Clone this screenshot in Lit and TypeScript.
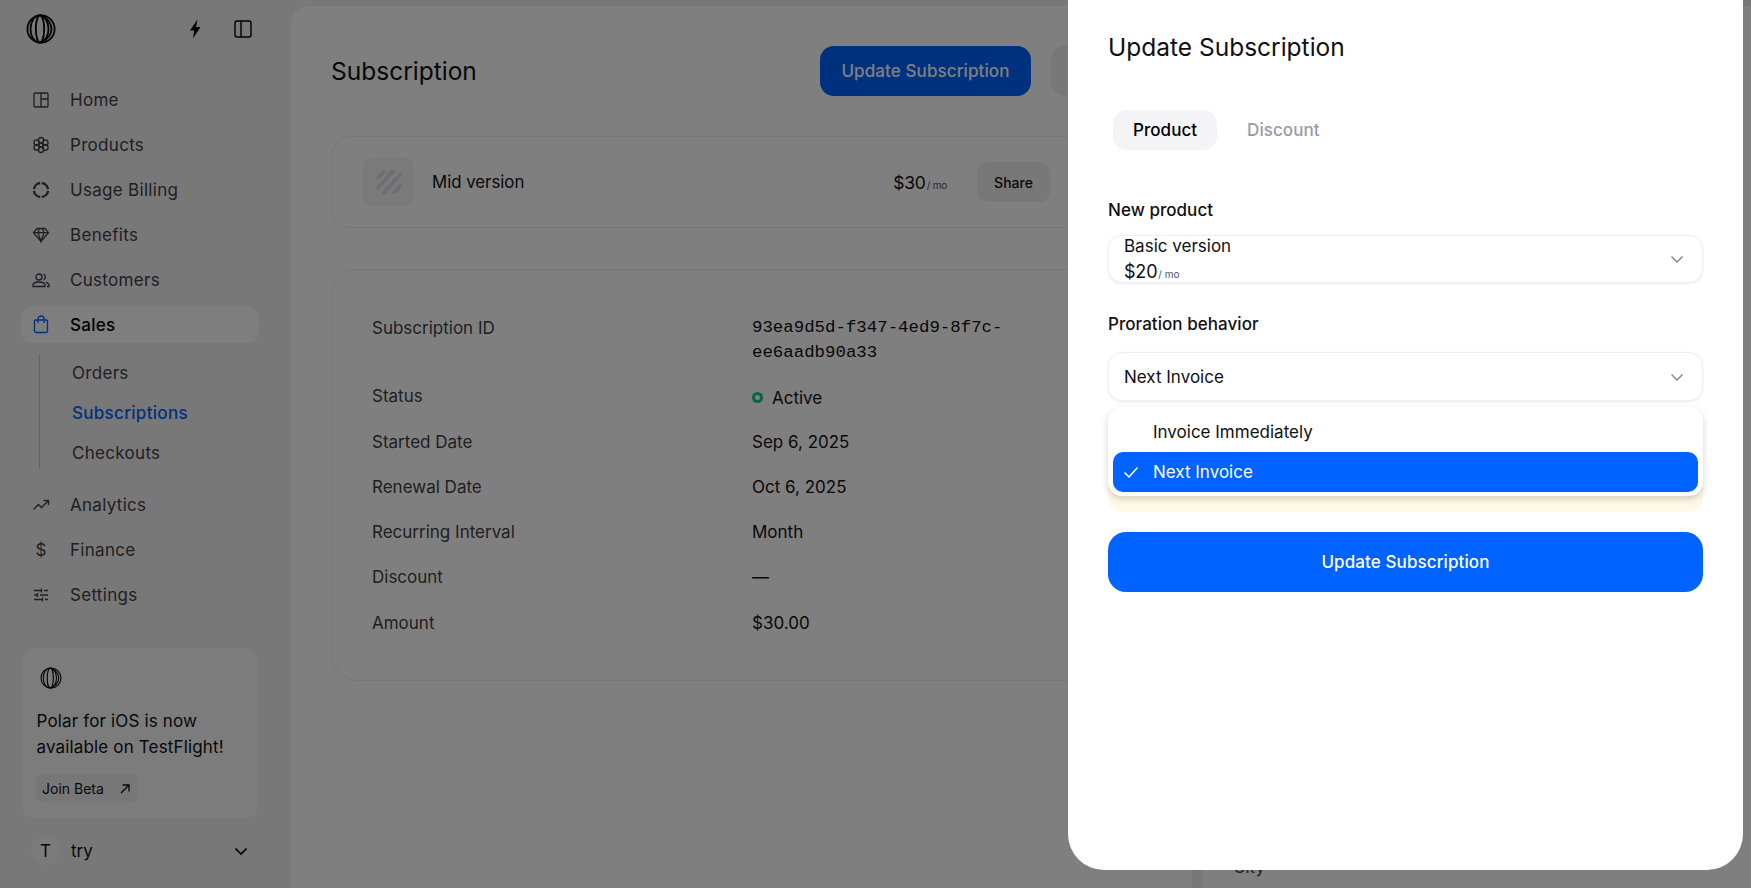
import { LitElement, html, css, svg } from "lit";
import { customElement } from "lit/decorators.js";

const logo = (size: number, sw = 1.8) => html`<svg class="logo" width=${size} height=${size} viewBox="0 0 30 30" fill="none" stroke="#000" stroke-width=${sw}>
  <circle cx="15" cy="15" r="13.600"/><ellipse cx="13.500" cy="15" rx="9" ry="13.600"/><ellipse cx="14" cy="15" rx="4.200" ry="13.600"/>
  <path d="M15 1.400C22 5 25.500 10 25.500 15S22 25 15 28.600" /></svg>`;

const icons: Record<string, unknown> = {
  home: svg`<rect x="3" y="3" width="14" height="14" rx="1"/><path d="M10 3v14M10 9h7"/>`,
  products: svg`<circle cx="10" cy="10" r="2"/><circle cx="10" cy="5.200" r="2.700"/><circle cx="10" cy="14.800" r="2.700"/><circle cx="5.600" cy="7.600" r="2.700"/><circle cx="14.400" cy="7.600" r="2.700"/><circle cx="5.600" cy="12.400" r="2.700"/><circle cx="14.400" cy="12.400" r="2.700"/>`,
  usage: svg`<path d="M3 9.200A7 7 0 0 1 9.200 3M10.800 3A7 7 0 0 1 17 9.200M17 10.800A7 7 0 0 1 10.800 17M9.200 17A7 7 0 0 1 3 10.800" stroke-width="2.400"/>`,
  benefits: svg`<path d="M6 3.500h8l3.500 4.200L10 16.500 2.500 7.700zM2.500 7.700h15M7 7.700 10 16.500l3-8.800M7 7.700 8.500 3.500M13 7.700 11.500 3.500"/>`,
  customers: svg`<circle cx="8" cy="7" r="3"/><path d="M2 16.500v-1.200C2 13 5 12 8 12s6 1 6 3.300v1.200zM12.500 4.200a3 3 0 0 1 0 5.600M15 12.300c1.800.5 3 1.500 3 3v1.200h-2"/>`,
  sales: svg`<path d="M4.500 5h11a1 1 0 0 1 1 1v10a1.500 1.500 0 0 1-1.500 1.500H5A1.500 1.500 0 0 1 3.500 16V6a1 1 0 0 1 1-1z"/><path d="M7 8V4a3 3 0 0 1 6 0v4"/>`,
  analytics: svg`<path d="M2.500 14.500 7.500 9.500l3 3L17 6M12.500 5.500H17.500V10"/>`,
  settings: svg`<path d="M3 5.500h7M13 5.500h4M10.500 3.500v4M3 10h3M9 10h8M6.500 8v4M3 14.500h8M14 14.500h3M11.500 12.500v4"/>`,
};
const ic = (n: string, cls = "") => html`<svg class="ic ${cls}" viewBox="0 0 20 20" fill="none" stroke="currentColor" stroke-width="1.300">${icons[n]}</svg>`;
const chev = html`<svg class="chev" viewBox="0 0 16 16" fill="none" stroke="#808089" stroke-width="1.300"><path d="M2.500 5.500 8 11l5.500-5.500"/></svg>`;

@customElement("app-root")
export class AppRoot extends LitElement {
  static styles = css`
    :host { display: block; width: 1751px; height: 888px; position: relative; overflow: hidden; background: #f0f0f3; font-family: Inter, "Liberation Sans", sans-serif; font-size: 17px; color: #101012; }
    .page { display: flex; height: 888px; }
    .side { width: 291px; flex: none; display: flex; flex-direction: column; padding: 14px 32px 0 21px; box-sizing: border-box; }
    .top { display: flex; align-items: center; height: 30px; padding-left: 5px; margin-right: -5px; }
    .top .sp { flex: 1; }
    .bolt { width: 20px; height: 20px; margin-right: 28px; }
    .dock { width: 20px; height: 20px; margin-right: 11px; }
    nav { margin-top: 33px; display: flex; flex-direction: column; color: #3f3f46; letter-spacing: .3px; }
    .item { height: 45px; display: flex; align-items: center; gap: 19px; padding-left: 10px; flex: none; }
    .ic { width: 20px; height: 20px; flex: none; }
    .item.active { height: 37px; margin: 4px 0; background: #fcfcfd; border-radius: 12px; color: #000; font-weight: 500; }
    .item.active .ic { color: #0062ff; }
    .subs { margin: 7px 0 13px 18px; height: 115px; border-left: 1px solid #c9c9ce; padding-left: 32px; display: flex; flex-direction: column; color: #3f3f46; }
    .subs span { height: 40px; line-height: 40px; flex: none; }
    .subs span:first-child { margin-top: -1px; }
    .subs .on { color: #0062ff; font-weight: 500; }
    .promo { margin-top: 31px; height: 170px; box-sizing: border-box; background: #f8f8fa; border-radius: 14px; padding: 19px 15.500px; line-height: 26px; flex: none; letter-spacing: .15px; }
    .promo .logo { display: block; margin: 0 0 19px 3.500px; }
    .join { display: inline-flex; align-items: center; gap: 14px; height: 29px; margin-top: 14px; margin-left: -.5px; padding: 0 6px; background: #eeeef1; border-radius: 8px; font-size: 14px; letter-spacing: 0; }
    .join svg { width: 14px; height: 14px; }
    .user { display: flex; align-items: center; margin-top: 19px; padding: 0 11px; gap: 12px; }
    .ava { width: 27px; height: 27px; border-radius: 50%; background: #f6f6f8; box-shadow: 0 0 0 1px #f8f8fa; display: flex; align-items: center; justify-content: center; }
    .user .sp { flex: 1; }
    .user svg { width: 20px; height: 20px; margin-right: -3px; }
    .panels { flex: 1; display: flex; gap: 11px; padding-top: 6px; min-width: 0; }
    .mainp { width: 901px; flex: none; background: #fff; border-radius: 18px 18px 0 0; padding: 40px 40px 0 40px; box-sizing: border-box; }
    .right { flex: 1; background: #fff; border-radius: 18px 0 0 0; position: relative; }
    .city { position: absolute; left: 30px; top: 851px; color: #3f3f46; }
    .head { display: flex; align-items: center; height: 50px; gap: 20px; }
    h1 { font-weight: 400; font-size: 24.500px; margin: 0; flex: 1; }
    .btn { height: 50px; width: 211px; background: #0062ff; color: #fff; border-radius: 14px; display: flex; align-items: center; justify-content: center; font-weight: 500; flex: none; box-sizing: border-box; letter-spacing: .1px; }
    .btn.gh { width: 101px; background: #f0f0f3; }
    .card1 { margin-top: 40px; height: 92px; box-sizing: border-box; border: 1px solid #ececef; border-radius: 20px; display: flex; align-items: center; padding: 0 101px 0 31px; }
    .thumb { width: 51px; height: 50px; background: #f4f4f6; border-radius: 10px; display: flex; align-items: center; justify-content: center; flex: none; }
    .thumb svg { width: 26px; height: 24px; }
    .mid { margin-left: 18px; flex: 1; font-size: 16.800px; }
    .price { font-size: 17.500px; letter-spacing: -.2px; }
    .price small { font-size: 10px; color: #52525b; margin-left: 1px; }
    .share { margin-left: 30px; width: 73px; height: 40px; border-radius: 10px; background: #f0f0f3; display: flex; align-items: center; justify-content: center; font-size: 14px; font-weight: 500; flex: none; }
    .card2 { margin-top: 41px; height: 412px; box-sizing: border-box; border: 1px solid #ececef; border-radius: 28px; padding: 46px 40px 0; display: grid; grid-template-columns: 380px 1fr; align-content: start; }
    .k { color: #3f3f46; height: 45.200px; display: flex; align-items: center; }
    .v { height: 45.200px; display: flex; align-items: center; }
    .k.first { height: 57px; align-items: flex-start; line-height: 25px; }
    .v.mono { height: 57px; display: block; font-family: "Liberation Mono", monospace; font-size: 17.400px; line-height: 24.500px; width: 290px; }
    .k.st, .v.status { height: 46.200px; }
    .v.status { padding-top: 3px; box-sizing: border-box; }
    .dot { width: 5px; height: 5px; border: 3px solid #10c78f; border-radius: 50%; margin-right: 9px; flex: none; }
    .overlay { position: absolute; inset: 0; background: rgba(0,0,0,.5); }
    .modal { position: absolute; left: 1068px; top: 0; width: 675px; height: 870px; background: #fff; border-radius: 0 0 36px 36px; padding: 0 40px; box-sizing: border-box; display: flex; flex-direction: column; }
    h2 { font-weight: 400; font-size: 24.500px; margin: 32px 0 0; line-height: 30px; }
    .tabs { display: flex; margin: 48px 0 0 5px; gap: 10px; height: 40px; letter-spacing: .05px; }
    .tab { padding: 0 20px; display: flex; align-items: center; border-radius: 14px; font-weight: 500; color: #9a9aa6; }
    .tab.on { background: #f4f4f7; color: #000; }
    .lbl { font-weight: 500; font-size: 17px; line-height: 24px; letter-spacing: .05px; }
    .lbl.a { margin-top: 48px; }
    .lbl.b { margin-top: 29px; }
    .sel { position: relative; border: 1px solid #f0f0f3; box-shadow: 0 1px 3px rgba(0,0,0,.08); border-radius: 14px; display: flex; align-items: center; padding: 0 15px; box-sizing: border-box; background: #fff; }
    .sel .chev { position: absolute; right: 17px; width: 16px; height: 16px; }
    .sel.a { height: 48px; margin-top: 13px; }
    .sel.b { height: 49px; margin-top: 16px; }
    .sel .two { line-height: 25px; padding-top: 2px; }
    .sel small { font-size: 10px; color: #52525b; margin-left: 1px; }
    .amt { font-size: 18px; letter-spacing: -.2px; }
    .dropwrap { position: relative; height: 0; }
    .yellow { position: absolute; left: 0; right: 0; top: 12px; height: 99px; background: #fdfae6; border-radius: 14px; }
    .drop { position: absolute; left: 0; right: 0; top: 6px; height: 89px; background: #fff; border-radius: 14px; box-shadow: 0 3px 7px rgba(0,0,0,.18); padding: 5px; box-sizing: border-box; }
    .opt { height: 40px; display: flex; align-items: center; padding-left: 40px; border-radius: 10px; position: relative; }
    .opt.on { background: #0062ff; color: #fff; }
    .opt svg { position: absolute; left: 9px; width: 18px; height: 18px; }
    .submit { margin-top: 131px; height: 60px; background: #0062ff; color: #fff; font-weight: 500; border-radius: 18px; display: flex; align-items: center; justify-content: center; position: relative; flex: none; letter-spacing: .1px; }
  `;

  render() {
    const rows = [["Started Date", "Sep 6, 2025"], ["Renewal Date", "Oct 6, 2025"], ["Recurring Interval", "Month"], ["Discount", "—"], ["Amount", "$30.00"]];
    return html`
      <div class="page">
        <aside class="side">
          <div class="top">${logo(30)}<span class="sp"></span>
            <svg class="bolt" viewBox="0 0 20 20"><path d="M12.500 .5 5 11.500h4.200L8 19.500 15.500 8h-4.500z" fill="#000"/></svg>
            <svg class="dock" viewBox="0 0 20 20" fill="none" stroke="#000" stroke-width="1.400"><rect x="2" y="2" width="16" height="16" rx="2"/><path d="M8 2v16"/></svg>
          </div>
          <nav>
            <div class="item">${ic("home")}Home</div>
            <div class="item">${ic("products")}Products</div>
            <div class="item">${ic("usage")}Usage Billing</div>
            <div class="item">${ic("benefits")}Benefits</div>
            <div class="item">${ic("customers")}Customers</div>
            <div class="item active">${ic("sales")}Sales</div>
            <div class="subs"><span>Orders</span><span class="on">Subscriptions</span><span>Checkouts</span></div>
            <div class="item">${ic("analytics")}Analytics</div>
            <div class="item"><span class="ic" style="text-align:center;line-height:20px">$</span>Finance</div>
            <div class="item">${ic("settings")}Settings</div>
          </nav>
          <div class="promo">${logo(22, 1.5)}Polar for iOS is now<br>available on TestFlight!
            <div class="join">Join Beta <svg viewBox="0 0 14 14" fill="none" stroke="#101012" stroke-width="1.300"><path d="M3 11 11 3M4.500 3H11V9.500"/></svg></div>
          </div>
          <div class="user"><span class="ava">T</span>try<span class="sp"></span><svg viewBox="0 0 20 20" fill="none" stroke="#000" stroke-width="1.700"><path d="M4.500 7.500 10 13l5.500-5.500"/></svg></div>
        </aside>
        <div class="panels">
          <main class="mainp">
            <div class="head"><h1>Subscription</h1><div class="btn">Update Subscription</div><div class="btn gh"></div></div>
            <div class="card1">
              <div class="thumb"><svg viewBox="0 0 26 24" fill="none" stroke="#dcdce0" stroke-width="3.500"><path d="M1 9 9 0M1 19 18 0M7 24 25 4M17 24 25 15"/></svg></div>
              <div class="mid">Mid version</div>
              <div class="price">$30<small>/ mo</small></div>
              <div class="share">Share</div>
            </div>
            <div class="card2">
              <div class="k first">Subscription ID</div><div class="v mono">93ea9d5d-f347-4ed9-8f7c-ee6aadb90a33</div>
              <div class="k st">Status</div><div class="v status"><span class="dot"></span>Active</div>
              ${rows.map(([k, v]) => html`<div class="k">${k}</div><div class="v">${v}</div>`)}
            </div>
          </main>
          <section class="right"><span class="city">City</span></section>
        </div>
      </div>
      <div class="overlay"></div>
      <div class="modal">
        <h2>Update Subscription</h2>
        <div class="tabs"><div class="tab on">Product</div><div class="tab">Discount</div></div>
        <div class="lbl a">New product</div>
        <div class="sel a"><div class="two">Basic version<br><span class="amt">$20</span><small>/ mo</small></div>${chev}</div>
        <div class="lbl b">Proration behavior</div>
        <div class="sel b">Next Invoice${chev}</div>
        <div class="dropwrap">
          <div class="yellow"></div>
          <div class="drop">
            <div class="opt">Invoice Immediately</div>
            <div class="opt on"><svg viewBox="0 0 18 18" fill="none" stroke="#fff" stroke-width="1.500"><path d="M2.500 9.500 7 14l8.500-9.500"/></svg>Next Invoice</div>
          </div>
        </div>
        <div class="submit">Update Subscription</div>
      </div>
    `;
  }
}
